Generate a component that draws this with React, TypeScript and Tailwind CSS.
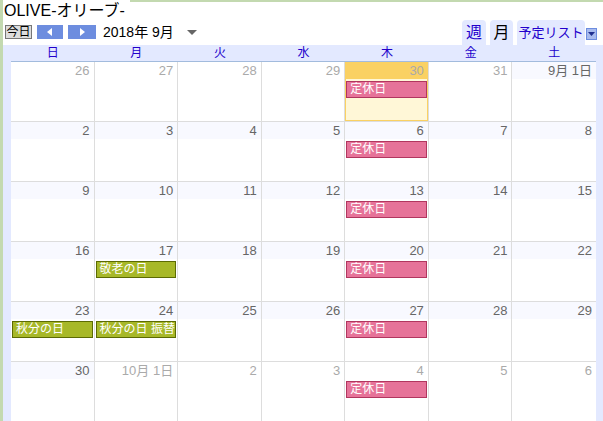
import React from 'react';

type Ev = { label: string; kind: 'pink' | 'green' };
type Day = { label: string; out?: boolean; today?: boolean; events?: Ev[] };

const WEEKDAYS = ['日', '月', '火', '水', '木', '金', '土'];

const closed: Ev = { label: '定休日', kind: 'pink' };

const WEEKS: Day[][] = [
  [
    { label: '26', out: true },
    { label: '27', out: true },
    { label: '28', out: true },
    { label: '29', out: true },
    { label: '30', out: true, today: true, events: [closed] },
    { label: '31', out: true },
    { label: '9月 1日' },
  ],
  [
    { label: '2' },
    { label: '3' },
    { label: '4' },
    { label: '5' },
    { label: '6', events: [closed] },
    { label: '7' },
    { label: '8' },
  ],
  [
    { label: '9' },
    { label: '10' },
    { label: '11' },
    { label: '12' },
    { label: '13', events: [closed] },
    { label: '14' },
    { label: '15' },
  ],
  [
    { label: '16' },
    { label: '17', events: [{ label: '敬老の日', kind: 'green' }] },
    { label: '18' },
    { label: '19' },
    { label: '20', events: [closed] },
    { label: '21' },
    { label: '22' },
  ],
  [
    { label: '23', events: [{ label: '秋分の日', kind: 'green' }] },
    { label: '24', events: [{ label: '秋分の日 振替休日', kind: 'green' }] },
    { label: '25' },
    { label: '26' },
    { label: '27', events: [closed] },
    { label: '28' },
    { label: '29' },
  ],
  [
    { label: '30' },
    { label: '10月 1日', out: true },
    { label: '2', out: true },
    { label: '3', out: true },
    { label: '4', out: true, events: [closed] },
    { label: '5', out: true },
    { label: '6', out: true },
  ],
];

const font = 'font-["Liberation_Sans","Noto_Sans_CJK_JP",sans-serif]';

const EventChip: React.FC<{ ev: Ev }> = ({ ev }) => (
  <div
    className={`mx-[1px] h-[17px] overflow-hidden whitespace-nowrap border px-[3px] text-[12px] leading-[15px] text-white ${
      ev.kind === 'pink' ? 'border-[#b1365f] bg-[#e67399]' : 'border-[#5c6b03] bg-[#a7b828]'
    }`}
  >
    {ev.label}
  </div>
);

const DayCell: React.FC<{ day: Day; last: boolean }> = ({ day, last }) => {
  const headBg = day.today ? 'bg-[#fad163]' : day.out ? 'bg-white' : 'bg-[#f8f9ff]';
  return (
    <div
      className={`flex min-w-0 flex-col ${last ? '' : 'border-r border-[#dddddd]'} ${
        day.today ? 'bg-[#fff7d7] shadow-[inset_0_0_0_1px_#fad163]' : 'bg-white'
      }`}
    >
      <div
        className={`h-[17px] pr-[4px] text-right text-[13px] leading-[17px] ${headBg} ${
          day.out ? 'text-[#aaaaaa]' : 'text-[#666666]'
        }`}
      >
        {day.label}
      </div>
      <div className="mt-[2px] flex flex-col gap-[1px]">
        {day.events?.map((ev, i) => (
          <EventChip key={i} ev={ev} />
        ))}
      </div>
    </div>
  );
};

export default function App() {
  return (
    <div className={`relative h-[421px] w-[603px] overflow-hidden bg-white ${font}`}>
      {/* 外枠の緑ライン */}
      <div className="absolute left-0 top-0 h-full w-[3px] bg-[#c3d9b0]" />
      <div className="absolute left-[130px] right-0 top-0 h-[2px] bg-[#c3d9b0]" />

      <div className="flex h-full flex-col pl-[3px]">
        <div className="h-[22px] pl-[1px] text-[16px] leading-[22px] text-black">OLIVE-オリーブ-</div>

        <div className="flex h-[23px] items-start">
          <div className="mt-[3px] flex items-center">
            <button className="ml-[2px] h-[14px] w-[27px] border border-[#777777] bg-[#dddddd] text-[12px] leading-[12px] text-black">
              今日
            </button>
            <button className="ml-[5px] flex h-[14px] w-[26px] items-center justify-center bg-[#6d8ddf]">
              <svg width="6" height="8" viewBox="0 0 6 8">
                <path d="M5 0 L0 4 L5 8 Z" fill="#ffffff" />
              </svg>
            </button>
            <button className="ml-[5px] flex h-[14px] w-[28px] items-center justify-center bg-[#6d8ddf]">
              <svg width="6" height="8" viewBox="0 0 6 8">
                <path d="M1 0 L6 4 L1 8 Z" fill="#ffffff" />
              </svg>
            </button>
            <span className="ml-[7px] whitespace-nowrap text-[14px] leading-[14px] text-black">2018年 9月</span>
            <svg className="ml-[13px]" width="10" height="5" viewBox="0 0 10 5">
              <path d="M0 0 L10 0 L5 5 Z" fill="#666666" />
            </svg>
          </div>
          <div className="ml-auto flex items-end self-end pr-[6px]">
            <div className="flex h-[25px] w-[24px] items-center justify-center rounded-t-[4px] bg-[#e3e9ff] text-[16px] text-[#2200cc]">
              週
            </div>
            <div className="ml-[4px] flex h-[25px] w-[23px] items-center justify-center rounded-t-[4px] bg-[#e3e9ff] text-[16px] text-black">
              月
            </div>
            <div className="ml-[4px] flex h-[25px] w-[68px] items-center justify-center whitespace-nowrap rounded-t-[4px] bg-[#e3e9ff] text-[13px] text-[#2200cc]">
              予定リスト
            </div>
            <div className="mb-[5px] ml-[1px] flex h-[12px] w-[11px] items-center justify-center border border-[#6d8ddf] bg-[#a8bbee]">
              <svg width="7" height="4" viewBox="0 0 7 4">
                <path d="M0 0 L7 0 L3.5 4 Z" fill="#1f2f8f" />
              </svg>
            </div>
          </div>
        </div>

        <div className="flex min-h-0 flex-1 flex-col bg-[#e3e9ff] pl-[8px] pr-[7px]">
          <div className="grid h-[17px] grid-cols-7 border-b border-[#a2bbdd]">
            {WEEKDAYS.map((d) => (
              <div key={d} className="text-center text-[12px] leading-[16px] text-[#2200cc]">
                {d}
              </div>
            ))}
          </div>
          <div className="flex flex-col">
            {WEEKS.map((week, wi) => (
              <div key={wi} className="grid h-[60px] shrink-0 grid-cols-7 border-b border-[#dddddd] bg-white">
                {week.map((day, di) => (
                  <DayCell key={di} day={day} last={di === 6} />
                ))}
              </div>
            ))}
          </div>
        </div>
      </div>
    </div>
  );
}
